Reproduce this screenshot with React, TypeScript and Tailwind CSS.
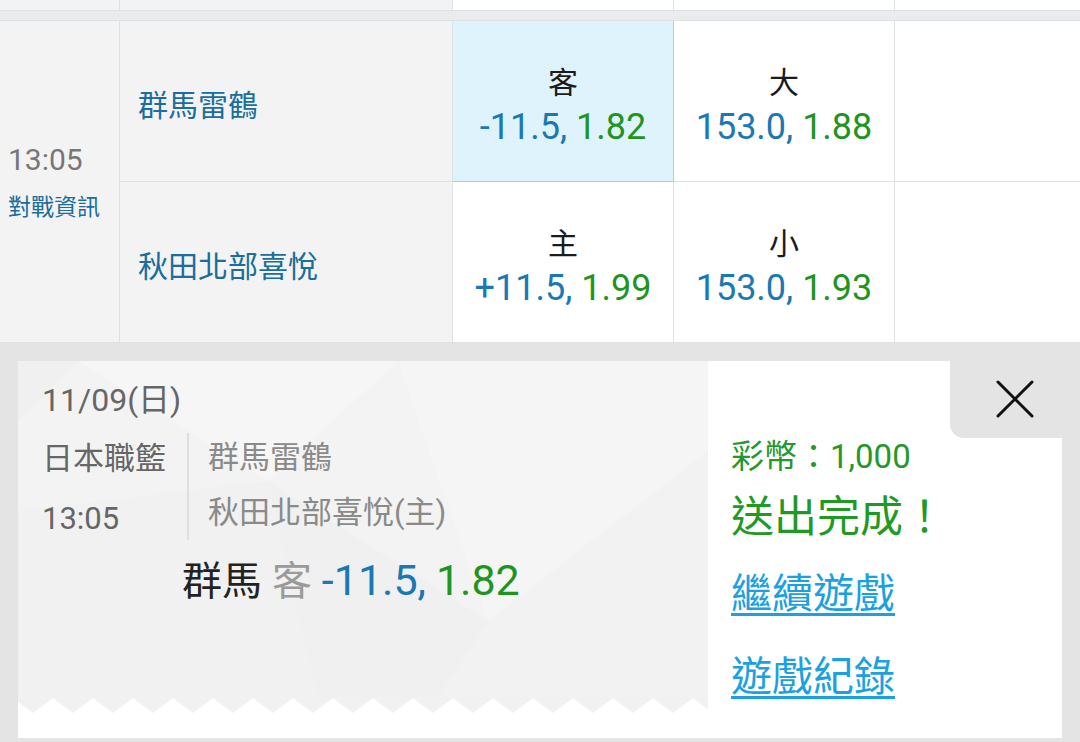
import clsx from "clsx";

const font = "font-['Roboto','Noto_Sans_CJK_TC',sans-serif]";

type Odds = { label: string; line: string; price: string; active?: boolean };

const rows: { team: string; spread: Odds; total: Odds }[] = [
  {
    team: "群馬雷鶴",
    spread: { label: "客", line: "-11.5", price: "1.82", active: true },
    total: { label: "大", line: "153.0", price: "1.88" },
  },
  {
    team: "秋田北部喜悅",
    spread: { label: "主", line: "+11.5", price: "1.99" },
    total: { label: "小", line: "153.0", price: "1.93" },
  },
];

const OddsCell = ({ label, line, price, active }: Odds) => (
  <div
    className={clsx(
      "flex flex-col items-center justify-center border-r border-b pt-[8px]",
      active ? "border-[#a9cfe2] bg-[#dff3fc]" : "border-[#dde1e3] bg-white"
    )}
  >
    <span className="text-[30px] leading-[40px] text-[#1b1b1b]">{label}</span>
    <span className="mt-[4px] text-[36px] leading-[40px]">
      <span className="text-[#1a78b5]">{line},</span>{" "}
      <span className="text-[#1f951f]">{price}</span>
    </span>
  </div>
);

const Backdrop = () => (
  <svg
    className="absolute inset-0 h-full w-full"
    viewBox="0 0 690 337"
    preserveAspectRatio="none"
  >
    <rect width="690" height="337" fill="#f3f3f3" />
    <polygon points="60,0 380,0 250,120" fill="#f6f6f6" />
    <polygon points="380,0 690,0 690,90 470,260" fill="#f5f5f5" />
    <polygon points="0,150 250,120 300,337 0,337" fill="#f1f1f1" />
    <polygon points="250,120 470,260 420,337 300,337" fill="#f0f0f0" />
    <polygon points="470,260 690,90 690,337 420,337" fill="#f2f2f2" />
    <polygon points="0,0 60,0 0,60" fill="#f0f0f0" />
  </svg>
);

const Zigzag = () => (
  <svg className="block h-[15px] w-full" preserveAspectRatio="none">
    <defs>
      <pattern id="zig" width="40" height="15" patternUnits="userSpaceOnUse">
        <rect width="40" height="15" fill="#ffffff" />
        <polygon points="-5,0 35,0 15,15" fill="#f1f1f1" />
        <polygon points="35,0 45,0 40,4" fill="#f1f1f1" />
      </pattern>
    </defs>
    <rect width="100%" height="15" fill="url(#zig)" />
  </svg>
);

export default function App() {
  return (
    <div className={clsx("h-[742px] w-[1080px] overflow-hidden bg-[#e4e4e4]", font)}>
      {/* tail of the previous match */}
      <div className="grid h-[11px] grid-cols-[120px_333px_221px_221px_1fr] border-b border-[#dde1e3]">
        <div className="border-r border-[#dde1e3] bg-[#f3f3f3]" />
        <div className="border-r border-[#dde1e3] bg-[#f3f3f3]" />
        <div className="border-r border-[#dde1e3] bg-white" />
        <div className="border-r border-[#dde1e3] bg-white" />
        <div className="bg-white" />
      </div>
      <div className="h-[10px] border-b border-[#dde1e3] bg-[#e9ebec]" />

      <div className="grid grid-cols-[120px_333px_221px_221px_1fr] grid-rows-[161px_161px]">
        <div className="row-span-2 flex flex-col justify-center border-r border-b border-[#dde1e3] bg-[#f3f3f3] pt-[5px] pl-[8px]">
          <span className="text-[30px] leading-[48px] text-[#777]">13:05</span>
          <span className="text-[23px] leading-[48px] text-[#1a6d9c]">對戰資訊</span>
        </div>
        {rows.map((r) => (
          <div key={r.team} className="contents">
            <div className="flex items-center border-r border-b border-[#dde1e3] bg-[#f3f3f3] pt-[8px] pl-[18px]">
              <span className="text-[30px] text-[#1a6d9c]">{r.team}</span>
            </div>
            <OddsCell {...r.spread} />
            <OddsCell {...r.total} />
            <div className="border-b border-[#dde1e3] bg-white" />
          </div>
        ))}
      </div>

      {/* bet slip */}
      <div className="px-[18px] pt-[18px]">
        <div className="relative flex h-[377px] bg-white">
          <div className="flex w-[690px] flex-col">
            <div className="relative flex-1">
              <Backdrop />
              <div className="relative flex flex-col pt-[19px] pl-[24px]">
                <span className="text-[32px] leading-[40px] text-[#666]">11/09(日)</span>
                <div className="mt-[13px] flex h-[107px]">
                  <div className="flex w-[147px] flex-col border-r-2 border-[#dedede] text-[31px] text-[#666]">
                    <span className="leading-[52px]">日本職籃</span>
                    <span className="mt-[8px] leading-[52px]">13:05</span>
                  </div>
                  <div className="flex flex-col pl-[19px] text-[31px] text-[#8a8a8a]">
                    <span className="leading-[50px]">群馬雷鶴</span>
                    <span className="mt-[5px] leading-[50px]">秋田北部喜悅(主)</span>
                  </div>
                </div>
                <div className="mt-[16px] pl-[140px] text-[40px] leading-[48px]">
                  <span className="text-[#222]">群馬</span>{" "}
                  <span className="text-[#9a9a9a]">客</span>{" "}
                  <span className="text-[43px] text-[#1a78b5]">-11.5,</span>{" "}
                  <span className="text-[43px] text-[#1f951f]">1.82</span>
                </div>
              </div>
            </div>
            <Zigzag />
            <div className="h-[25px]" />
          </div>

          <div className="flex flex-1 flex-col pl-[23px]">
            <span className="mt-[76px] text-[33px] leading-[40px] text-[#24982a]">彩幣：1,000</span>
            <span className="mt-[14px] text-[43px] leading-[52px] text-[#1f9a22]">送出完成！</span>
            <a className="mt-[25px] self-start text-[41px] leading-[52px] text-[#1ba1e2] underline decoration-[3px] underline-offset-[5px]">
              繼續遊戲
            </a>
            <a className="mt-[31px] self-start text-[41px] leading-[52px] text-[#1ba1e2] underline decoration-[3px] underline-offset-[5px]">
              遊戲紀錄
            </a>
          </div>

          <button className="absolute top-0 right-[-18px] flex h-[77px] w-[130px] items-center justify-center rounded-bl-[14px] bg-[#e4e4e4]">
            <svg width="38" height="38" viewBox="0 0 38 38" className="mt-[-2px]">
              <path d="M2 2L36 36M36 2L2 36" stroke="#111" strokeWidth="3" strokeLinecap="round" />
            </svg>
          </button>
        </div>
      </div>
    </div>
  );
}
